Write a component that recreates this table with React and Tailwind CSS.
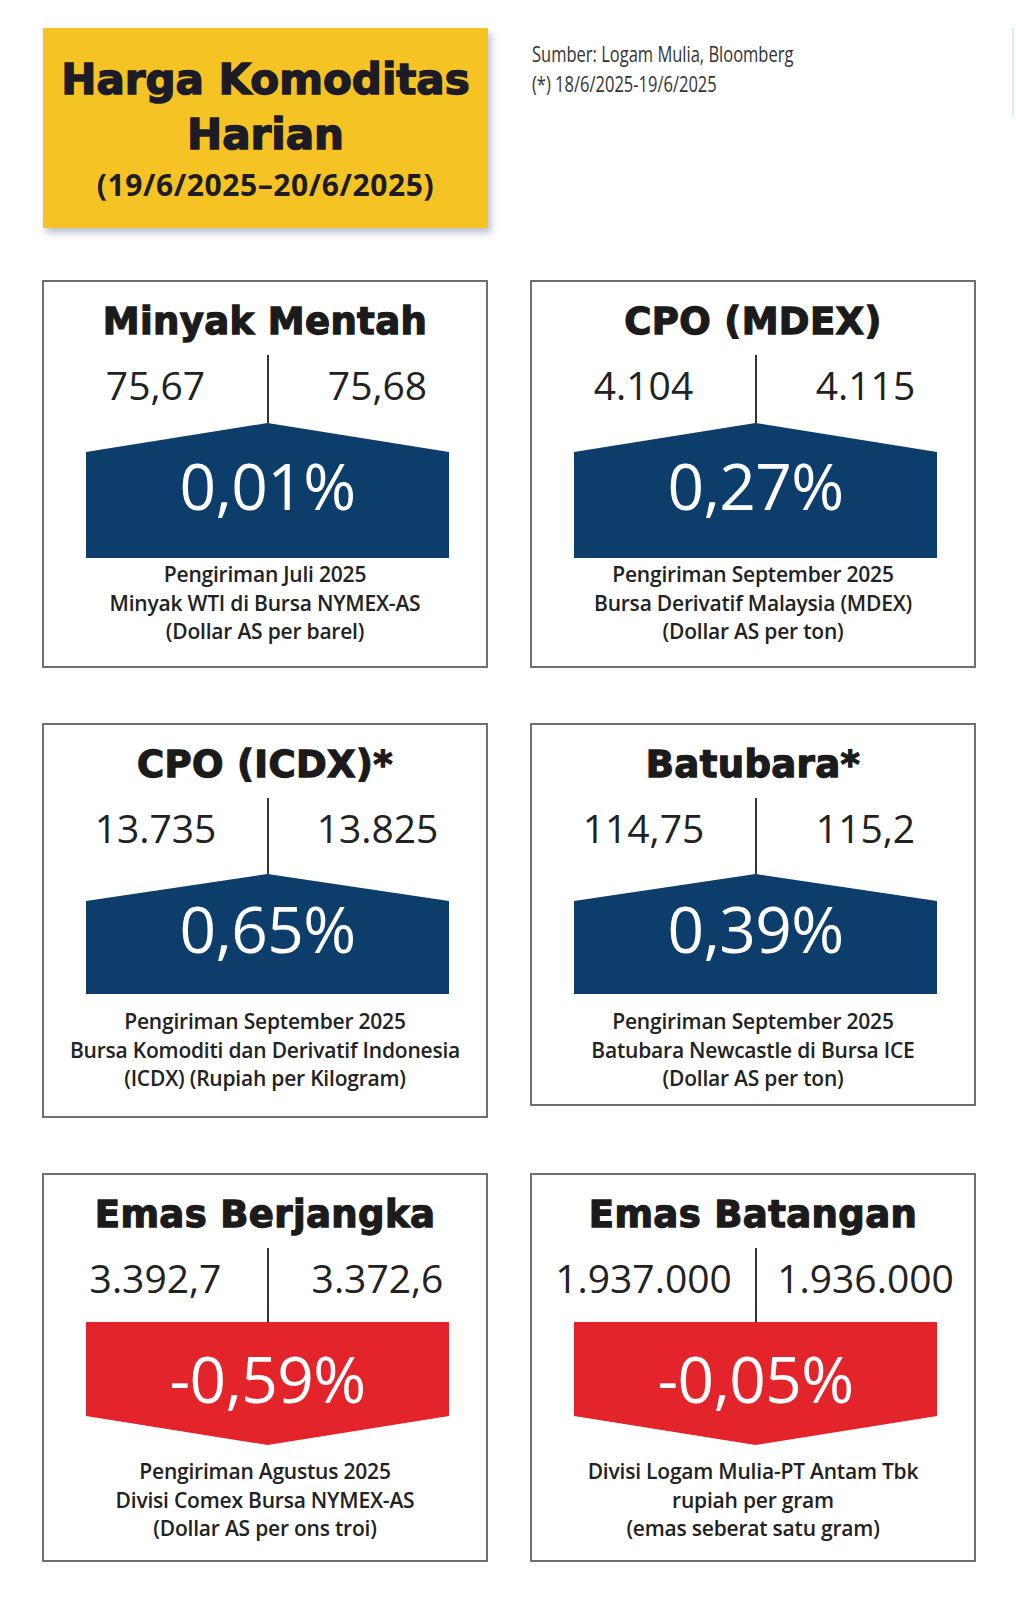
import React from "react";

const cards = [
  {
    title: "Minyak Mentah",
    before: "75,67",
    after: "75,68",
    pct: "0,01%",
    up: true,
    lines: ["Pengiriman Juli 2025", "Minyak WTI di Bursa NYMEX-AS", "(Dollar AS per barel)"],
    cardCls: "h-[388px]",
    rowCls: "h-[68px]",
    shapeCls: "h-[135px]",
    shapeH: 135,
    shoulder: 29,
    textCls: "pt-[31px]",
    capCls: "mt-[2px]",
  },
  {
    title: "CPO (MDEX)",
    before: "4.104",
    after: "4.115",
    pct: "0,27%",
    up: true,
    lines: ["Pengiriman September 2025", "Bursa Derivatif Malaysia (MDEX)", "(Dollar AS per ton)"],
    cardCls: "h-[388px]",
    rowCls: "h-[68px]",
    shapeCls: "h-[135px]",
    shapeH: 135,
    shoulder: 29,
    textCls: "pt-[31px]",
    capCls: "mt-[2px]",
  },
  {
    title: "CPO (ICDX)*",
    before: "13.735",
    after: "13.825",
    pct: "0,65%",
    up: true,
    lines: ["Pengiriman September 2025", "Bursa Komoditi dan Derivatif Indonesia", "(ICDX) (Rupiah per Kilogram)"],
    cardCls: "h-[395px]",
    rowCls: "h-[76px]",
    shapeCls: "h-[120px]",
    shapeH: 120,
    shoulder: 27,
    textCls: "pt-[23px]",
    capCls: "mt-[13px]",
  },
  {
    title: "Batubara*",
    before: "114,75",
    after: "115,2",
    pct: "0,39%",
    up: true,
    lines: ["Pengiriman September 2025", "Batubara Newcastle di Bursa ICE", "(Dollar AS per ton)"],
    cardCls: "h-[383px]",
    rowCls: "h-[76px]",
    shapeCls: "h-[120px]",
    shapeH: 120,
    shoulder: 27,
    textCls: "pt-[23px]",
    capCls: "mt-[13px]",
  },
  {
    title: "Emas Berjangka",
    before: "3.392,7",
    after: "3.372,6",
    pct: "-0,59%",
    up: false,
    lines: ["Pengiriman Agustus 2025", "Divisi Comex Bursa NYMEX-AS", "(Dollar AS per ons troi)"],
    cardCls: "h-[389px]",
    rowCls: "h-[74px]",
    shapeCls: "h-[123px]",
    shapeH: 123,
    shoulder: 29,
    textCls: "pt-[25px]",
    capCls: "mt-[12px]",
  },
  {
    title: "Emas Batangan",
    before: "1.937.000",
    after: "1.936.000",
    pct: "-0,05%",
    up: false,
    lines: ["Divisi Logam Mulia-PT Antam Tbk", "rupiah per gram", "(emas seberat satu gram)"],
    cardCls: "h-[389px]",
    rowCls: "h-[74px]",
    shapeCls: "h-[123px]",
    shapeH: 123,
    shoulder: 29,
    textCls: "pt-[25px]",
    capCls: "mt-[12px]",
  },
];

function Arrow({ up, h, shoulder }) {
  // up: roof-shaped top, down: pointed bottom
  const pts = up
    ? `0,${shoulder} 181.5,0 363,${shoulder} 363,${h} 0,${h}`
    : `0,0 363,0 363,${h - shoulder} 181.5,${h} 0,${h - shoulder}`;
  return (
    <svg className="absolute inset-0 w-full h-full" viewBox={`0 0 363 ${h}`} preserveAspectRatio="none">
      <polygon points={pts} fill={up ? "#0c3d6b" : "#e3242b"} />
    </svg>
  );
}

function PriceCard({ c }) {
  return (
    <div className={`${c.cardCls} border-2 border-[#707070] bg-white flex flex-col`}>
      <div className="h-[73px] pt-[22px]">
        <h3 className="text-center text-[37px] leading-[36px] font-bold text-[#1b1b1b] tracking-[0.01em] font-['DejaVu_Sans',sans-serif] whitespace-nowrap [-webkit-text-stroke:1.3px_#1b1b1b]">
          {c.title}
        </h3>
      </div>

      <div className={`${c.rowCls} flex font-['Open_Sans',sans-serif] text-[39px] leading-[40px] font-normal text-[#222]`}>
        <div className="w-[223px] text-center pt-[10px] whitespace-nowrap">{c.before}</div>
        <div className="w-[2px] bg-[#333]" />
        <div className="flex-1 text-center pt-[10px] whitespace-nowrap">{c.after}</div>
      </div>

      <div className={`${c.shapeCls} relative ml-[42px] w-[363px]`}>
        <Arrow up={c.up} h={c.shapeH} shoulder={c.shoulder} />
        <div className={`relative ${c.textCls} text-center text-white text-[64px] leading-[64px] font-medium tracking-[-0.01em] font-['Open_Sans',sans-serif]`}>
          {c.pct}
        </div>
      </div>

      <div className={`${c.capCls} text-center font-['Open_Sans',sans-serif] font-semibold text-[21px] leading-[28.5px] text-[#222] tracking-[-0.01em]`}>
        {c.lines.map((l) => (
          <div key={l} className="whitespace-nowrap">{l}</div>
        ))}
      </div>
    </div>
  );
}

export default function App() {
  return (
    <div className="w-[1016px] h-[1600px] bg-white pt-[28px]">
      <div className="flex items-start">
        <div className="ml-[43px] w-[445px] h-[200px] bg-[#f5c424] shadow-[3px_5px_7px_rgba(70,70,130,0.35)] pt-[24px] text-center text-[#1d1b26]">
          <div className="font-['DejaVu_Sans',sans-serif] font-bold text-[42px] leading-[55px] whitespace-nowrap [-webkit-text-stroke:1.5px_#1d1b26]">Harga Komoditas</div>
          <div className="font-['DejaVu_Sans',sans-serif] font-bold text-[42px] leading-[55px] [-webkit-text-stroke:1.5px_#1d1b26]">Harian</div>
          <div className="mt-[5px] font-['Open_Sans',sans-serif] font-bold text-[30px] leading-[36px] tracking-[0.02em] whitespace-nowrap">
            (19/6/2025–20/6/2025)
          </div>
        </div>

        <div className="ml-[44px] mt-[10px] origin-left scale-x-[0.75] font-['Open_Sans',sans-serif] text-[22px] leading-[30px] text-[#333] whitespace-nowrap">
          <div>Sumber: Logam Mulia, Bloomberg</div>
          <div>(*) 18/6/2025-19/6/2025</div>
        </div>

        <div className="ml-auto mr-[2px] w-[2px] h-[90px] bg-[#d6eff8]" />
      </div>

      <div className="mt-[52px] pl-[42px] grid grid-cols-[446px_446px] gap-x-[42px] gap-y-[55px] items-start">
        {cards.map((c) => (
          <PriceCard key={c.title} c={c} />
        ))}
      </div>
    </div>
  );
}
